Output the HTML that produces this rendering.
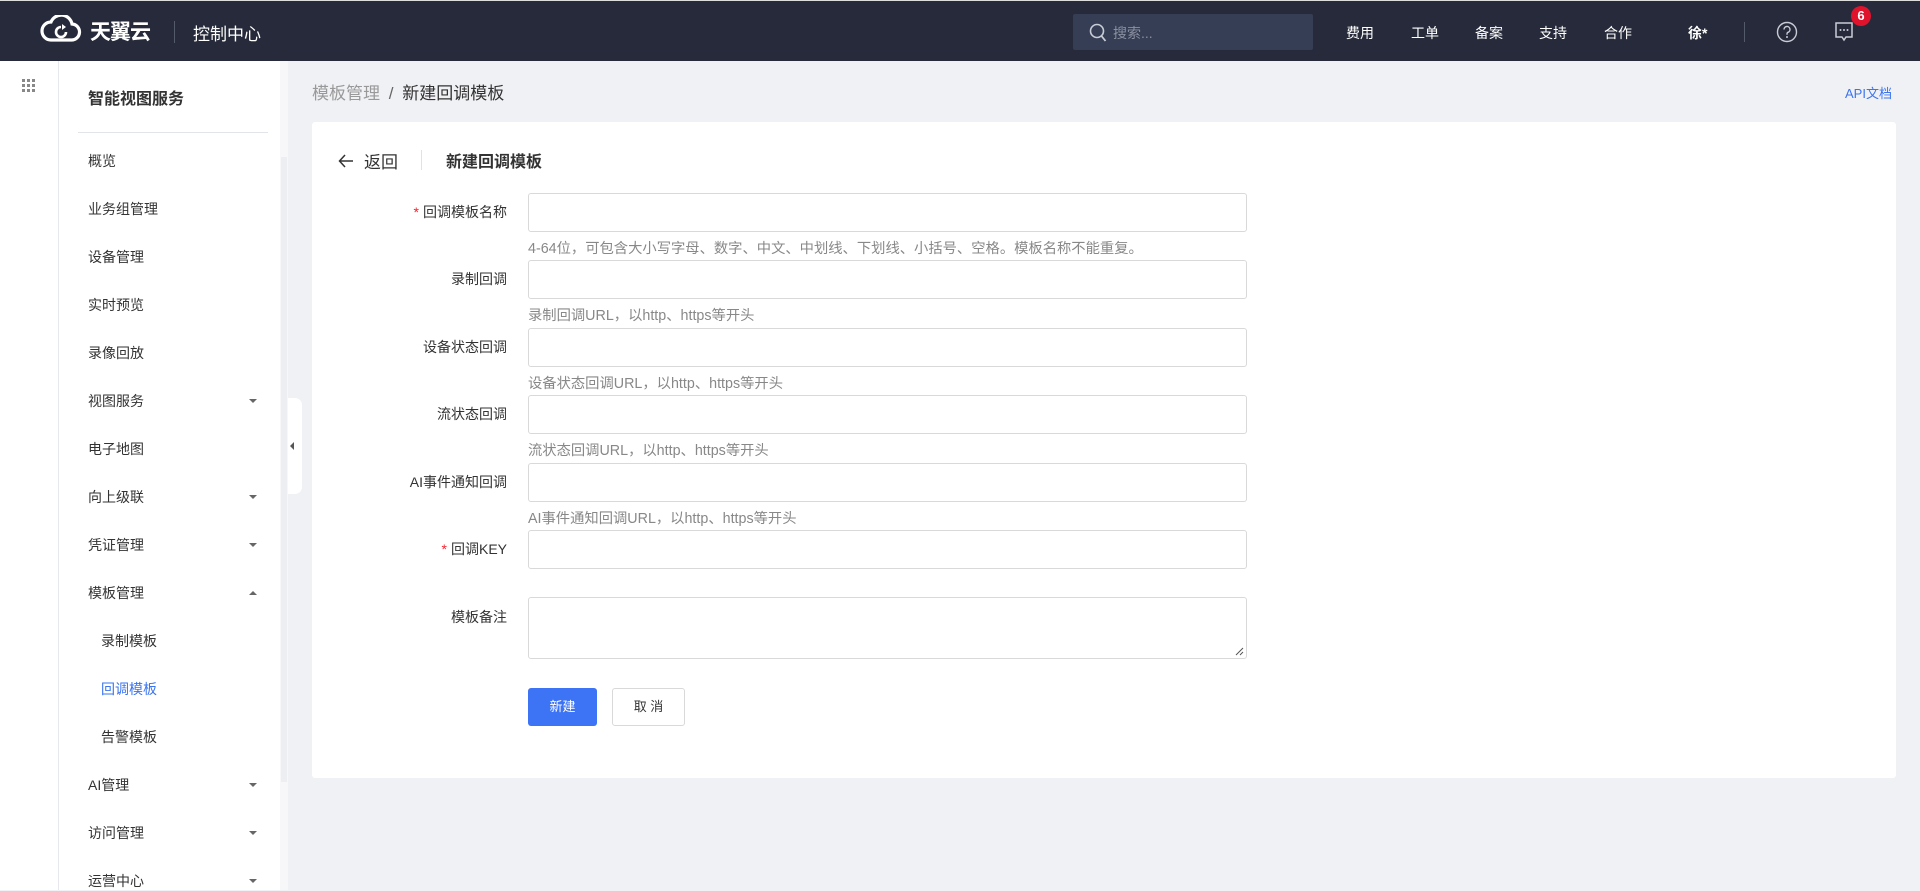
<!DOCTYPE html>
<html><head><meta charset="utf-8"><style>
*{margin:0;padding:0;box-sizing:border-box}
body{width:1920px;height:890px;overflow:hidden;background:#f0f1f5;font-family:"Liberation Sans","Noto Sans CJK SC",sans-serif;position:relative;color:#333}
.hd{position:absolute;left:0;top:0;width:1920px;height:61px;background:#262a3a;border-top:1px solid #ddd}
.abs{position:absolute}
.nav{position:absolute;top:22px;color:#fff;font-size:14px}
.side0{position:absolute;left:0;top:61px;width:59px;height:829px;background:#fff;border-right:1px solid #e6e8ee}
.side{position:absolute;left:59px;top:61px;width:221px;height:829px;background:#fff}
.track{position:absolute;left:280px;top:61px;width:8px;height:829px;background:#f7f7f9}
.thumb{position:absolute;left:281px;top:157px;width:6px;height:625px;background:#eceef2}
.mi{position:absolute;left:88px;font-size:14px;color:#333}
.sub{left:101px}
.arr{position:absolute;left:249px;width:0;height:0;border-left:4px solid transparent;border-right:4px solid transparent;border-top:4px solid #666}
.arr.up{border-top:none;border-bottom:4px solid #666}
.card{position:absolute;left:312px;top:122px;width:1584px;height:656px;background:#fff;border-radius:3px}
.lbl{position:absolute;right:1413px;font-size:14px;color:#333;text-align:right;white-space:nowrap}
.lbl b{color:#f5222d;font-weight:normal;margin-right:4px}
.inp{position:absolute;left:528px;width:719px;height:39px;border:1px solid #d9d9d9;border-radius:3px;background:#fff}
.hint{position:absolute;left:528px;font-size:14.3px;color:#888;white-space:nowrap}
</style></head><body>
<div class="hd">
 <svg class="abs" style="left:39px;top:14px" width="44" height="28" viewBox="0 0 44 28"><path d="M12 25 H32 a8 8 0 0 0 1-16 a11 11 0 0 0-21-2 a9 9 0 0 0 0 18z" fill="none" stroke="#fff" stroke-width="3.2"/><path d="M22 12 a5 5 0 1 0 5 5" fill="none" stroke="#fff" stroke-width="2.6"/><path d="M23 9 l4 3 -4 3z" fill="#fff"/></svg>
 <div class="abs" style="left:90px;top:15px;color:#fff;font-size:21px;font-weight:bold;letter-spacing:-1px">天翼云</div>
 <div class="abs" style="left:174px;top:20px;width:1px;height:22px;background:#555a6a"></div>
 <div class="abs" style="left:193px;top:19px;color:#fff;font-size:17px">控制中心</div>
 <div class="abs" style="left:1073px;top:13px;width:240px;height:36px;background:#353e55;border-radius:2px"></div>
 <svg class="abs" style="left:1089px;top:22px" width="18" height="20" viewBox="0 0 18 20"><circle cx="8" cy="8" r="6.5" fill="none" stroke="#c8ccd6" stroke-width="1.6"/><path d="M12.5 13 L16.5 18" stroke="#c8ccd6" stroke-width="1.8"/></svg>
 <div class="abs" style="left:1113px;top:22px;color:#8a90a0;font-size:14px">搜索...</div>
 <div class="nav" style="left:1346px">费用</div>
 <div class="nav" style="left:1411px">工单</div>
 <div class="nav" style="left:1475px">备案</div>
 <div class="nav" style="left:1539px">支持</div>
 <div class="nav" style="left:1604px">合作</div>
 <div class="nav" style="left:1688px;font-weight:bold">徐*</div>
 <div class="abs" style="left:1744px;top:21px;width:1px;height:20px;background:#555a6a"></div>
 <svg class="abs" style="left:1776px;top:20px" width="22" height="22" viewBox="0 0 22 22"><circle cx="11" cy="11" r="9.5" fill="none" stroke="#c8ccd6" stroke-width="1.4"/><path d="M8 8.5 a3 3 0 1 1 4 2.8 c-1 .5-1 1-1 2.5" fill="none" stroke="#c8ccd6" stroke-width="1.4"/><circle cx="11" cy="16" r="1" fill="#c8ccd6"/></svg>
 <svg class="abs" style="left:1834px;top:20px" width="20" height="22" viewBox="0 0 20 22"><path d="M2 2 H18 V16 H12 L10 19 L8 16 H2Z" fill="none" stroke="#c8ccd6" stroke-width="1.5"/><circle cx="6.5" cy="9" r="1" fill="#c8ccd6"/><circle cx="10" cy="9" r="1" fill="#c8ccd6"/><circle cx="13.5" cy="9" r="1" fill="#c8ccd6"/></svg>
 <div class="abs" style="left:1851px;top:5px;width:20px;height:20px;border-radius:10px;background:#e0132c;color:#fff;font-size:13px;text-align:center;line-height:20px;font-weight:bold">6</div>
</div>
<div class="side0"></div>
<svg class="abs" style="left:22px;top:79px" width="14" height="14" viewBox="0 0 14 14" fill="#888"><rect x="0" y="0" width="3" height="3"/><rect x="5" y="0" width="3" height="3"/><rect x="10" y="0" width="3" height="3"/><rect x="0" y="5" width="3" height="3"/><rect x="5" y="5" width="3" height="3"/><rect x="10" y="5" width="3" height="3"/><rect x="0" y="10" width="3" height="3"/><rect x="5" y="10" width="3" height="3"/><rect x="10" y="10" width="3" height="3"/></svg>
<div class="side"></div>
<div class="track"></div><div class="thumb"></div>
<div class="abs" style="left:88px;top:85px;font-size:16px;font-weight:bold;color:#333">智能视图服务</div>
<div class="abs" style="left:78px;top:132px;width:190px;height:1px;background:#e2e4ea"></div>
<div class="mi" style="top:151px">概览</div>
<div class="mi" style="top:199px">业务组管理</div>
<div class="mi" style="top:247px">设备管理</div>
<div class="mi" style="top:295px">实时预览</div>
<div class="mi" style="top:343px">录像回放</div>
<div class="mi" style="top:391px">视图服务</div><div class="arr" style="top:399px"></div>
<div class="mi" style="top:439px">电子地图</div>
<div class="mi" style="top:487px">向上级联</div><div class="arr" style="top:495px"></div>
<div class="mi" style="top:535px">凭证管理</div><div class="arr" style="top:543px"></div>
<div class="mi" style="top:583px">模板管理</div><div class="arr up" style="top:591px"></div>
<div class="mi sub" style="top:631px">录制模板</div>
<div class="mi sub" style="top:679px;color:#3b74f0">回调模板</div>
<div class="mi sub" style="top:727px">告警模板</div>
<div class="mi" style="top:775px">AI管理</div><div class="arr" style="top:783px"></div>
<div class="mi" style="top:823px">访问管理</div><div class="arr" style="top:831px"></div>
<div class="mi" style="top:871px">运营中心</div><div class="arr" style="top:879px"></div>
<div class="abs" style="left:288px;top:398px;width:14px;height:96px;background:#fff;border-radius:0 7px 7px 0"></div>
<div class="abs" style="left:290px;top:442px;width:0;height:0;border-top:4px solid transparent;border-bottom:4px solid transparent;border-right:4px solid #555"></div>
<div class="abs" style="left:312px;top:79px;font-size:17px;color:#999">模板管理 <span style="color:#666;margin:0 4px">/</span> <span style="color:#333">新建回调模板</span></div>
<div class="abs" style="left:1845px;top:83px;font-size:13px;color:#3b74f0">API文档</div>
<div class="card"></div>
<svg class="abs" style="left:338px;top:151px;top:154px" width="16" height="14" viewBox="0 0 16 14"><path d="M15 7 H2 M7 1 L1.5 7 L7 13" fill="none" stroke="#333" stroke-width="1.5"/></svg>
<div class="abs" style="left:364px;top:148px;font-size:17px;color:#333">返回</div>
<div class="abs" style="left:421px;top:150px;width:1px;height:20px;background:#e2e2e2"></div>
<div class="abs" style="left:446px;top:148px;font-size:16px;font-weight:bold;color:#333">新建回调模板</div>
<div class="lbl" style="top:202px"><b>*</b>回调模板名称</div><div class="inp" style="top:193px"></div>
<div class="hint" style="top:237px">4-64位，可包含大小写字母、数字、中文、中划线、下划线、小括号、空格。模板名称不能重复。</div>
<div class="lbl" style="top:269px">录制回调</div><div class="inp" style="top:260px"></div>
<div class="hint" style="top:304px">录制回调URL，以http、https等开头</div>
<div class="lbl" style="top:337px">设备状态回调</div><div class="inp" style="top:328px"></div>
<div class="hint" style="top:372px">设备状态回调URL，以http、https等开头</div>
<div class="lbl" style="top:404px">流状态回调</div><div class="inp" style="top:395px"></div>
<div class="hint" style="top:439px">流状态回调URL，以http、https等开头</div>
<div class="lbl" style="top:472px">AI事件通知回调</div><div class="inp" style="top:463px"></div>
<div class="hint" style="top:507px">AI事件通知回调URL，以http、https等开头</div>
<div class="lbl" style="top:539px"><b>*</b>回调KEY</div><div class="inp" style="top:530px"></div>
<div class="lbl" style="top:607px">模板备注</div><div class="inp" style="top:597px;height:62px"></div>
<svg class="abs" style="left:1234px;top:646px" width="10" height="10" viewBox="0 0 10 10"><path d="M9 2 L2 9 M9 6 L6 9" stroke="#555" stroke-width="1"/></svg>
<div class="abs" style="left:528px;top:688px;width:69px;height:38px;background:#3d74f5;border-radius:3px;color:#fff;font-size:13px;text-align:center;line-height:38px">新建</div>
<div class="abs" style="left:612px;top:688px;width:73px;height:38px;border:1px solid #d9d9d9;border-radius:3px;color:#333;font-size:13px;text-align:center;line-height:36px">取 消</div>
</body></html>
